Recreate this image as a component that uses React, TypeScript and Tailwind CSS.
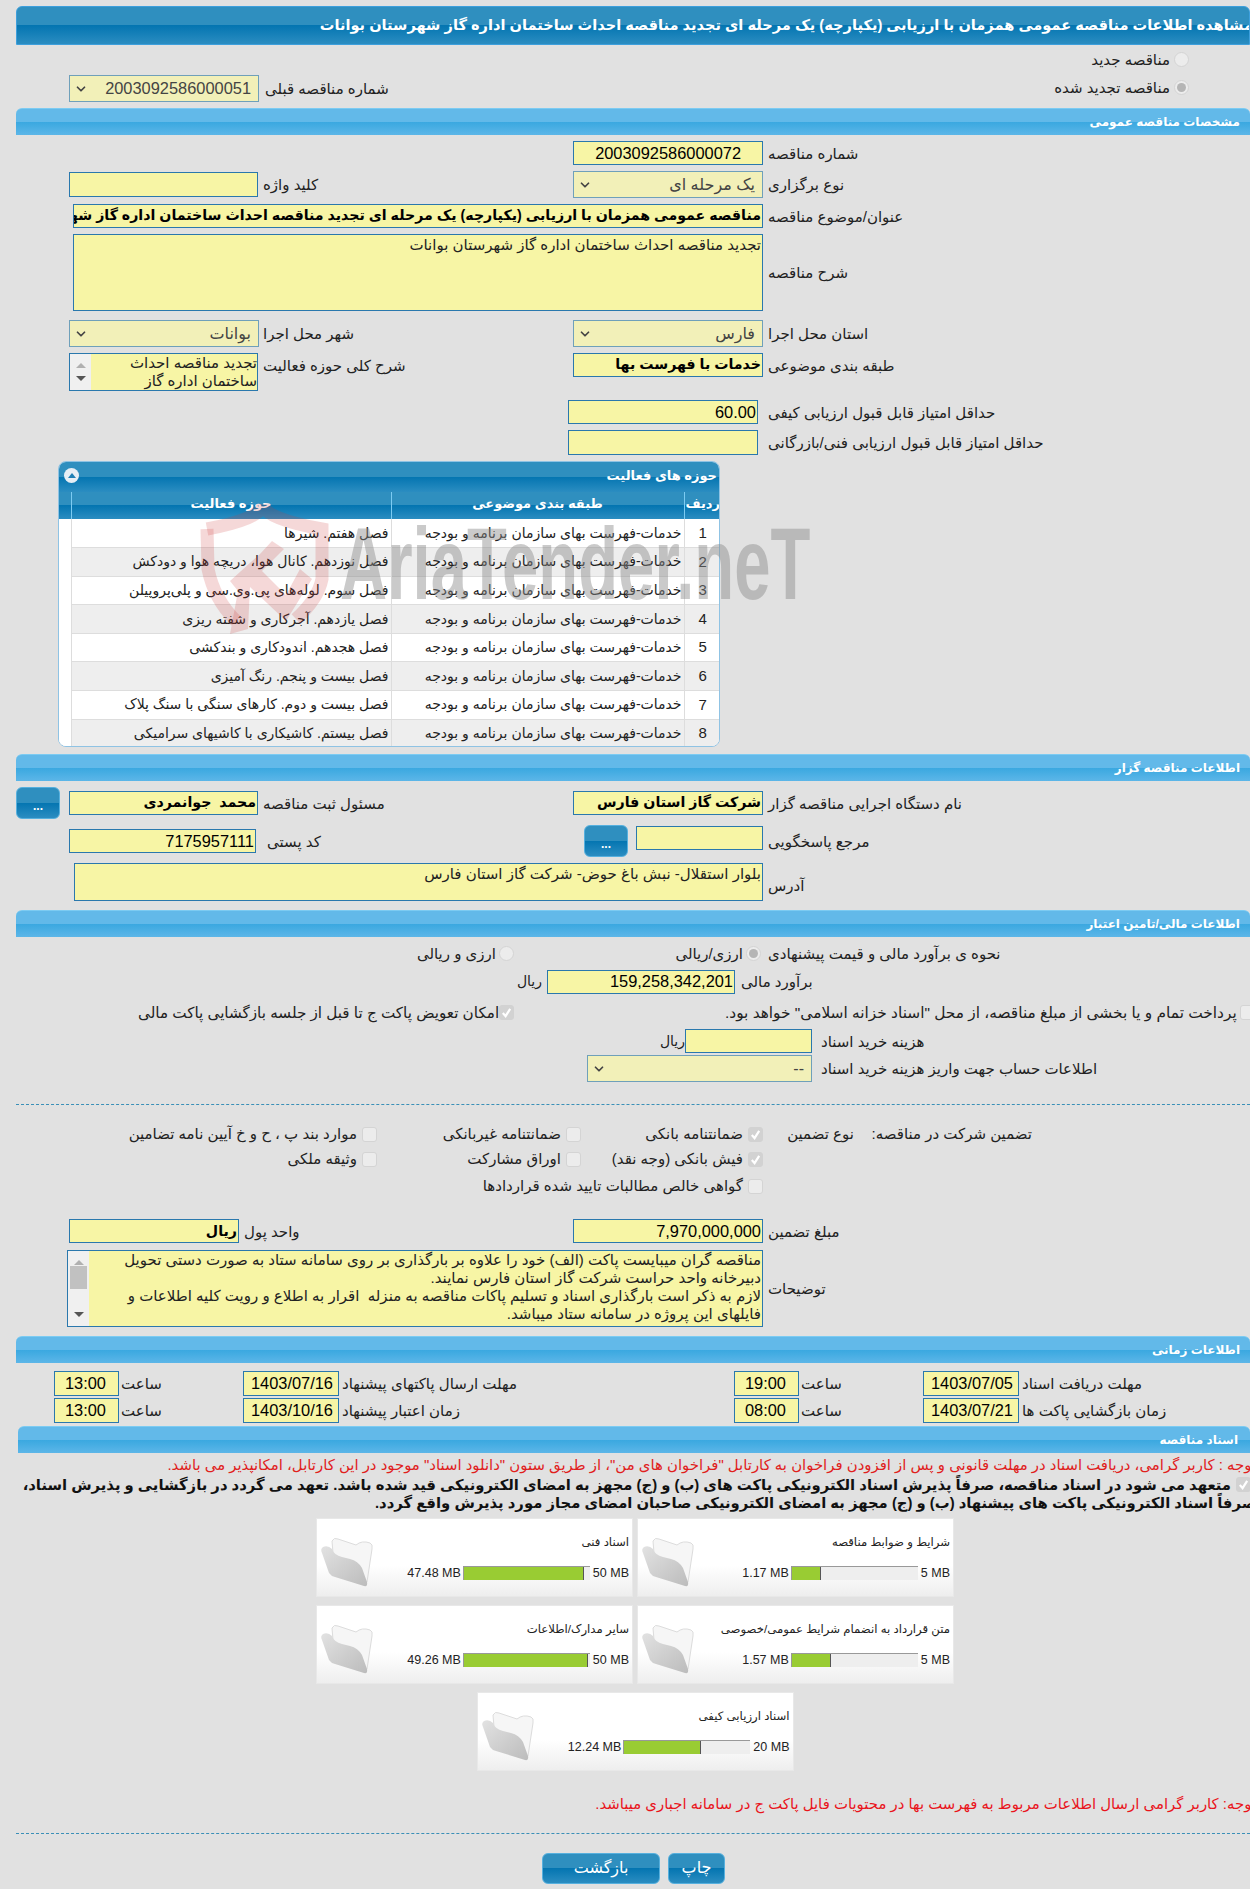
import type { ReactNode } from "react";
import { ChevronDown } from "lucide-react";

const TITLE_BG =
  "bg-[linear-gradient(to_bottom,#2f8fbf_0%,#2f8fbf_50%,#0475b1_50%,#2b8dc1_100%)]";
const SECTION_BG =
  "bg-[linear-gradient(to_bottom,#62b9e9_0%,#62b9e9_50%,#3aa8e0_50%,#5cb6e8_100%)]";

const ROWS = [
  ["1", "فصل هفتم. شیرها"],
  ["2", "فصل نوزدهم. کانال هوا، دریچه هوا و دودکش"],
  ["3", "فصل سوم. لوله‌های پی.وی.سی و پلی‌پروپیلن"],
  ["4", "فصل یازدهم. آجرکاری و شفته ریزی"],
  ["5", "فصل هجدهم. اندودکاری و بندکشی"],
  ["6", "فصل بیست و پنجم. رنگ آمیزی"],
  ["7", "فصل بیست و دوم. کارهای سنگی با سنگ پلاک"],
  ["8", "فصل بیستم. کاشیکاری با کاشیهای سرامیکی"],
];

const DOCS = [
  { title: "شرایط و ضوابط مناقصه", used: 1.17, max: 5 },
  { title: "اسناد فنی", used: 47.48, max: 50 },
  { title: "متن قرارداد به انضمام شرایط عمومی/خصوصی", used: 1.57, max: 5 },
  { title: "سایر مدارک/اطلاعات", used: 49.26, max: 50 },
  { title: "اسناد ارزیابی کیفی", used: 12.24, max: 20 },
];

function Section({ title, className = "" }: { title: string; className?: string }) {
  return (
    <div
      dir="rtl"
      className={`h-[27px] rounded-t-[6px] border-t border-[#7ccbf2] flex items-center pr-[10px] text-white text-[12px] font-bold ${SECTION_BG} ${className}`}
    >
      {title}
    </div>
  );
}

function Box({
  w,
  h = "h-[24px]",
  big,
  strong,
  children,
}: {
  w: string;
  h?: string;
  big?: boolean;
  strong?: boolean;
  children?: ReactNode;
}) {
  return (
    <div
      dir="rtl"
      className={`${w} ${h} shrink-0 bg-[#f7f5a5] border border-[#2a78ad] overflow-hidden whitespace-pre flex items-center pr-px text-black ${
        big ? "text-[16.4px]" : "text-[15px]"
      } ${strong ? "!text-[14.2px] font-bold" : ""}`}
    >
      {children}
    </div>
  );
}

function Select({ w, value, big }: { w: string; value: string; big?: boolean }) {
  return (
    <div className={`${w} h-[27px] shrink-0 bg-[#f2f0b8] border border-[#6fa0ba] flex items-center justify-between pl-[4px] pr-[7px] text-[#444]`}>
      <ChevronDown size={14} strokeWidth={3} className="text-[#444]" />
      <span dir="rtl" className={big ? "text-[16.4px]" : "text-[16px]"}>
        {value}
      </span>
    </div>
  );
}

function Label({ children, size = "text-[15px]" }: { children: ReactNode; size?: string }) {
  return (
    <span dir="rtl" className={`inline-block mt-[2px] ${size} text-[#222] whitespace-nowrap`}>
      {children}
    </span>
  );
}

function Radio({ on }: { on?: boolean }) {
  return (
    <span className="w-[15px] h-[15px] shrink-0 rounded-full border border-[#d4d4d4] bg-[#ececec] flex items-center justify-center">
      {on && <span className="w-[9px] h-[9px] rounded-full bg-[#b5b5b5]" />}
    </span>
  );
}

function Check({ on }: { on?: boolean }) {
  return (
    <span className={`w-[15px] h-[15px] shrink-0 rounded-[3px] border flex items-center justify-center ${on ? "bg-[#d2d2d2] border-[#d2d2d2]" : "bg-[#ececec] border-[#d4d4d4]"}`}>
      {on && (
        <svg width="11" height="11" viewBox="0 0 12 12" fill="none" stroke="#fff" strokeWidth="2.4">
          <path d="M2 6.5 5 10 10 2" />
        </svg>
      )}
    </span>
  );
}

function Opt({ on, children }: { on?: boolean; children: ReactNode }) {
  return (
    <span className="flex items-center gap-[5px] whitespace-nowrap text-[15px] text-[#222]">
      <Check on={on} />
      {children}
    </span>
  );
}

function Dots() {
  return (
    <button className={`w-[44px] h-[32px] shrink-0 rounded-[6px] border border-[#56b0de] text-white text-[12px] font-bold leading-[36px] ${TITLE_BG}`}>
      ...
    </button>
  );
}

function Scrollbar({ thumb }: { thumb?: boolean }) {
  return (
    <div className="w-[21px] h-full shrink-0 bg-[#f0f0f0] flex flex-col items-center justify-between py-[9px]">
      <span className="w-0 h-0 border-x-[5px] border-x-transparent border-b-[5px] border-b-[#b0b0b0]" />
      {thumb && <span className="w-[17px] h-[23px] bg-[#c1c1c1] -mt-[22px]" />}
      <span className="w-0 h-0 border-x-[5px] border-x-transparent border-t-[5px] border-t-[#555]" />
    </div>
  );
}

function Folder() {
  return (
    <svg width="54" height="52" viewBox="0 0 54 52" className="shrink-0">
      <defs>
        <linearGradient id="fld" x1="0" y1="0" x2="1" y2="1">
          <stop offset="0" stopColor="#e2e2e2" />
          <stop offset="1" stopColor="#bcbcbc" />
        </linearGradient>
      </defs>
      <path d="M12 6 Q14 2 18 4 L36 10 Q42 5 50 8 Q53 9 52 14 L47 47 Q46 50 43 48 L14 30Z" fill="#f6f6f6" stroke="#dcdcdc" />
      <path d="M3 12 Q0 14 2 18 L9 38 Q11 41 15 42 L44 51 Q48 52 47 47 L42 33 Q38 26 30 24 L22 22 Q14 20 12 14 Q8 10 3 12Z" fill="url(#fld)" />
    </svg>
  );
}

function DocCard({ title, used, max }: { title: string; used: number; max: number }) {
  return (
    <div dir="ltr" className="w-[317px] h-[79px] bg-[linear-gradient(to_bottom,#ffffff_0%,#ffffff_60%,#eeeeee_100%)] border border-[#e8e8e8] flex pl-[3px] pr-[3px]">
      <div className="pt-[16px]">
        <Folder />
      </div>
      <div className="flex-1 flex flex-col">
        <div dir="rtl" className="mt-[15px] text-[11.7px] text-[#222] leading-[16px] whitespace-nowrap">
          {title}
        </div>
        <div className="mt-[14px] flex items-center justify-end gap-[2px] text-[12.5px] text-[#222]">
          <span>{used.toFixed(2)} MB</span>
          <div className="w-[127px] h-[14px] bg-[#eeeeee] border-t border-l border-[#999]">
            <div className="h-full bg-[#99cc33] border-r border-[#555]" style={{ width: `${(used / max) * 100}%` }} />
          </div>
          <span className="ml-px">{max} MB</span>
        </div>
      </div>
    </div>
  );
}

function Watermark() {
  return (
    <>
      <svg width="130" height="140" viewBox="0 0 130 140" className="absolute left-[142px] top-[38px] pointer-events-none">
        <g fill="none" stroke="#cc3a3a" strokeOpacity="0.2" strokeWidth="13">
          <path d="M7 30 Q60 20 63 6 Q66 20 122 30 L122 80 Q118 100 96 120" />
          <path d="M7 30 L8 70 Q14 100 36 122" />
        </g>
        <path d="M30 82 L60 55 L72 42 L84 50 L62 72 L86 96 L100 70 L112 80 L86 122 L50 88 L48 130 L30 135 L38 92Z" fill="#cc3a3a" fillOpacity="0.2" />
      </svg>
      <div className="absolute left-[282px] top-[53px] origin-left scale-x-[0.64] text-[102px] leading-[100px] font-bold text-[#8a8a8a]/45 whitespace-nowrap pointer-events-none">
        AriaTender.neT
      </div>
    </>
  );
}

export default function App() {
  return (
    <div className="relative w-[1250px] h-[1889px] overflow-hidden bg-[#e1e1e1] pl-4 pt-[6px] font-['Liberation_Sans','DejaVu_Sans',sans-serif]">
      {/* Title */}
      <div
        dir="rtl"
        className={`h-[39px] rounded-t-[6px] border border-[#3d9fdc] flex items-center justify-start overflow-hidden whitespace-nowrap text-white text-[14.6px] font-bold ${TITLE_BG}`}
      >
        <span className="-mr-[4px]">مشاهده اطلاعات مناقصه عمومی همزمان با ارزیابی (یکپارچه) یک مرحله ای تجدید مناقصه احداث ساختمان اداره گاز شهرستان بوانات</span>
      </div>

      {/* Renewal choice */}
      <div className="h-[63px] flex justify-between pl-[53px] pr-[61px]">
        <div className="flex items-center gap-[6px] h-[27px] mt-[30px]">
          <Select w="w-[190px]" value="2003092586000051" big />
          <Label>شماره مناقصه قبلی</Label>
        </div>
        <div dir="rtl" className="flex flex-col gap-[14px] pt-[7px]">
          <div className="h-[14px] flex items-center gap-[4px]">
            <Radio />
            <Label>مناقصه جدید</Label>
          </div>
          <div className="h-[14px] flex items-center gap-[4px]">
            <Radio on />
            <Label>مناقصه تجدید شده</Label>
          </div>
        </div>
      </div>

      <Section title="مشخصات مناقصه عمومی" />

      <div className="pl-[53px] mt-[6px] grid grid-cols-[504px_1fr] grid-rows-[24px_27px] gap-y-[6px]">
        <div />
        <div className="flex items-center gap-[5px]">
          <Box w="w-[190px]" big>
            <span className="pr-[20px]">2003092586000072</span>
          </Box>
          <Label>شماره مناقصه</Label>
        </div>
        <div className="flex items-center gap-[5px]">
          <Box w="w-[189px]" h="h-[25px]" />
          <Label>کلید واژه</Label>
        </div>
        <div className="flex items-center gap-[5px]">
          <Select w="w-[190px]" value="یک مرحله ای" />
          <Label>نوع برگزاری</Label>
        </div>
      </div>

      <div className="pl-[57px] mt-[6px] h-[24px] flex items-center gap-[5px]">
        <Box w="w-[690px]" strong>
          مناقصه عمومی همزمان با ارزیابی (یکپارچه) یک مرحله ای تجدید مناقصه احداث ساختمان اداره گاز شهرستان بوانات
        </Box>
        <Label>عنوان/موضوع مناقصه</Label>
      </div>

      <div className="pl-[57px] mt-[6px] h-[77px] flex items-center gap-[5px]">
        <div dir="rtl" className="w-[690px] h-[77px] shrink-0 bg-[#f7f5a5] border border-[#2a78ad] pr-px text-[15px] leading-[20px] text-[#222]">
          تجدید مناقصه احداث ساختمان اداره گاز شهرستان بوانات
        </div>
        <Label>شرح مناقصه</Label>
      </div>

      <div className="pl-[53px] mt-[9px] grid grid-cols-[504px_1fr] grid-rows-[27px_38px] gap-y-[6px]">
        <div className="flex items-center gap-[4px]">
          <Select w="w-[190px]" value="بوانات" />
          <Label>شهر محل اجرا</Label>
        </div>
        <div className="flex items-center gap-[5px]">
          <Select w="w-[190px]" value="فارس" />
          <Label>استان محل اجرا</Label>
        </div>
        <div className="flex items-start gap-[5px]">
          <div className="w-[189px] h-[38px] shrink-0 bg-[#f7f5a5] border border-[#2a78ad] flex overflow-hidden">
            <Scrollbar />
            <div dir="rtl" className="flex-1 text-[15px] leading-[18px] text-[#222] whitespace-nowrap">
              <div>تجدید مناقصه احداث</div>
              <div>ساختمان اداره گاز</div>
            </div>
          </div>
          <Label>شرح کلی حوزه فعالیت</Label>
        </div>
        <div className="flex items-start gap-[5px]">
          <Box w="w-[190px]" strong>
            خدمات با فهرست بها
          </Box>
          <Label>طبقه بندی موضوعی</Label>
        </div>
      </div>

      <div className="ml-[552px] mt-[9px] h-[24px] flex items-center gap-[10px]">
        <Box w="w-[190px]" big>
          60.00
        </Box>
        <Label>حداقل امتیاز قابل قبول ارزیابی کیفی</Label>
      </div>
      <div className="ml-[552px] mt-[6px] h-[25px] flex items-center gap-[10px]">
        <Box w="w-[190px]" h="h-[25px]" />
        <Label>حداقل امتیاز قابل قبول ارزیابی فنی/بازرگانی</Label>
      </div>

      {/* Activity table */}
      <div className="relative ml-[42px] mt-[6px] w-[662px] h-[286px]">
        <div className="h-full rounded-[8px] overflow-hidden border border-[#8fc3e4] bg-white">
          <div dir="rtl" className={`h-[30px] flex items-center justify-between pr-[2px] pl-[5px] pb-[3px] text-white text-[13px] font-bold ${TITLE_BG}`}>
            <span>حوزه های فعالیت</span>
            <span className="w-[15px] h-[15px] rounded-full bg-[#e6eef5] flex items-center justify-center">
              <span className="w-0 h-0 border-x-[4px] border-x-transparent border-b-[5px] border-b-[#1f7fb5]" />
            </span>
          </div>
          <table dir="rtl" className="w-full table-fixed border-collapse text-[14px] text-[#222]">
            <colgroup>
              <col className="w-[37px]" />
              <col className="w-[293px]" />
              <col className="w-[320px]" />
              <col className="w-[12px]" />
            </colgroup>
            <thead>
              <tr className={`h-[27px] text-white text-[13px] ${TITLE_BG}`}>
                <th className="border-l border-[#7ccbf2] font-bold pb-[3px]">ردیف</th>
                <th className="border-l border-[#7ccbf2] font-bold pb-[3px]">طبقه بندی موضوعی</th>
                <th className="border-l border-[#7ccbf2] font-bold pb-[3px]">حوزه فعالیت</th>
                <th />
              </tr>
            </thead>
            <tbody>
              {ROWS.map(([n, name], i) => (
                <tr key={n} className={`h-[28.6px] ${i % 2 ? "bg-[#eeeeee]" : "bg-white"}`}>
                  <td className="text-center text-[15px] border-l border-b border-[#dddddd]">{n}</td>
                  <td className="pr-[2px] whitespace-nowrap overflow-hidden border-l border-b border-[#dddddd]">خدمات-فهرست بهای سازمان برنامه و بودجه</td>
                  <td className="pr-[2px] whitespace-nowrap overflow-hidden border-l border-b border-[#dddddd]">{name}</td>
                  <td className="bg-white" />
                </tr>
              ))}
            </tbody>
          </table>
        </div>
        <Watermark />
      </div>

      <Section title="اطلاعات مناقصه گزار" className="mt-[7px]" />

      <div className="mt-[6px] h-[32px] flex items-center">
        <Dots />
        <div className="ml-[9px] flex items-center gap-[5px] w-[504px]">
          <Box w="w-[189px]" strong>
            محمد  جوانمردی
          </Box>
          <Label>مسئول ثبت مناقصه</Label>
        </div>
        <div className="flex items-center gap-[5px]">
          <Box w="w-[190px]" strong>
            شرکت گاز استان فارس
          </Box>
          <Label>نام دستگاه اجرایی مناقصه گزار</Label>
        </div>
      </div>
      <div className="mt-[6px] h-[32px] pl-[53px] flex items-center">
        <div className="flex items-center gap-[11px] w-[515px]">
          <Box w="w-[187px]" big>
            7175957111
          </Box>
          <Label>کد پستی</Label>
        </div>
        <Dots />
        <div className="ml-[8px] -mt-[6px] flex items-center gap-[5px]">
          <Box w="w-[127px]" />
          <span className="mt-[6px]">
            <Label>مرجع پاسخگویی</Label>
          </span>
        </div>
      </div>
      <div className="pl-[58px] mt-[6px] flex items-center gap-[5px]">
        <div dir="rtl" className="w-[689px] h-[38px] shrink-0 bg-[#f7f5a5] border border-[#2a78ad] pr-px text-[15px] leading-[20px] text-[#222]">
          بلوار استقلال- نبش باغ حوض- شرکت گاز استان فارس
        </div>
        <span className="mt-[6px]">
          <Label>آدرس</Label>
        </span>
      </div>

      <Section title="اطلاعات مالی/تامین اعتبار" className="mt-[9px]" />

      <div className="h-[32px] flex items-center">
        <div className="w-[498px] flex items-center justify-end gap-[3px]">
          <Label>ارزی و ریالی</Label>
          <Radio />
        </div>
        <div className="w-[247px] flex items-center justify-end gap-[3px]">
          <Label>ارزی/ریالی</Label>
          <Radio on />
        </div>
        <span className="ml-[7px]">
          <Label>نحوه ی برآورد مالی و قیمت پیشنهادی</Label>
        </span>
      </div>

      <div className="h-[25px] pl-[503px] flex items-center">
        <span className="w-[28px] pr-[5px] text-[14px] text-[#222]" dir="rtl">ریال</span>
        <Box w="w-[188px]" big>
          159,258,342,201
        </Box>
        <span className="ml-[6px]">
          <Label>برآورد مالی</Label>
        </span>
      </div>

      <div className="mt-[8px] h-[20px] flex items-center pl-[122px] w-[1300px]">
        <div className="w-[587px] flex items-center">
          <Label size="text-[15.2px]">امکان تعویض پاکت ج تا قبل از جلسه بازگشایی پاکت مالی</Label>
          <Check on />
        </div>
        <Label size="text-[15.4px]">پرداخت تمام و یا بخشی از مبلغ مناقصه، از محل "اسناد خزانه اسلامی" خواهد بود.</Label>
        <span className="ml-[3px]">
          <Check />
        </span>
      </div>

      <div className="mt-[7px] h-[24px] pl-[646px] flex items-center">
        <span className="w-[23px] text-[14px] text-[#222]" dir="rtl">ریال</span>
        <Box w="w-[127px]" />
        <span className="ml-[9px]">
          <Label>هزینه خرید اسناد</Label>
        </span>
      </div>
      <div className="mt-[2px] h-[27px] pl-[571px] flex items-center gap-[9px]">
        <Select w="w-[225px]" value="--" />
        <Label>اطلاعات حساب جهت واریز هزینه خرید اسناد</Label>
      </div>

      <div className="mt-[22px] border-t border-dashed border-[#3a8fb7]" />

      {/* Guarantee */}
      <div dir="rtl" className="mt-[17px] pr-[218px] grid grid-cols-[178px_91px_182px_204px_1fr] grid-rows-[25px_24px_30px] items-center text-[15px] text-[#222] whitespace-nowrap">
        <span>تضمین شرکت در مناقصه:</span>
        <span>نوع تضمین</span>
        <Opt on>ضمانتنامه بانکی</Opt>
        <Opt>ضمانتنامه غیربانکی</Opt>
        <Opt>موارد بند پ ، ح و خ آیین نامه تضامین</Opt>
        <span />
        <span />
        <Opt on>فیش بانکی (وجه نقد)</Opt>
        <Opt>اوراق مشارکت</Opt>
        <Opt>وثیقه ملکی</Opt>
        <span />
        <span />
        <span className="col-span-3">
          <Opt>گواهی خالص مطالبات تایید شده قراردادها</Opt>
        </span>
      </div>

      <div className="mt-[18px] pl-[53px] grid grid-cols-[504px_1fr]">
        <div className="flex items-center gap-[5px]">
          <Box w="w-[170px]" strong>
            ریال
          </Box>
          <Label>واحد پول</Label>
        </div>
        <div className="flex items-center gap-[5px]">
          <Box w="w-[190px]" big>
            7,970,000,000
          </Box>
          <Label>مبلغ تضمین</Label>
        </div>
      </div>

      <div className="mt-[6px] pl-[51px] flex items-center gap-[5px]">
        <div className="w-[696px] h-[77px] shrink-0 bg-[#f7f5a5] border border-[#2a78ad] flex overflow-hidden">
          <Scrollbar thumb />
          <div dir="rtl" className="flex-1 pr-px text-[15px] leading-[18px] text-[#222] whitespace-pre">
            <div>مناقصه گران میبایست پاکت (الف) خود را علاوه بر بارگذاری بر روی سامانه ستاد به صورت دستی تحویل</div>
            <div>دبیرخانه واحد حراست شرکت گاز استان فارس نمایند.</div>
            <div>لازم به ذکر است بارگذاری اسناد و تسلیم پاکات مناقصه به منزله  اقرار به اطلاع و رویت کلیه اطلاعات و</div>
            <div>فایلهای این پروژه در سامانه ستاد میباشد.</div>
          </div>
        </div>
        <Label>توضیحات</Label>
      </div>

      <Section title="اطلاعات زمانی" className="mt-[9px]" />

      <div className="pl-[38px] mt-[8px] flex flex-col gap-[2px]">
        {[
          ["13:00", "1403/07/16", "مهلت ارسال پاکتهای پیشنهاد", "19:00", "1403/07/05", "مهلت دریافت اسناد"],
          ["13:00", "1403/10/16", "زمان اعتبار پیشنهاد", "08:00", "1403/07/21", "زمان بازگشایی پاکت ها"],
        ].map((r) => (
          <div key={r[1]} className="h-[25px] grid grid-cols-[189px_491px_189px_1fr] items-center">
            <div className="flex items-center gap-[2px]">
              <Box w="w-[65px]" h="h-[25px]" big>
                <span className="pr-[11px]">{r[0]}</span>
              </Box>
              <Label>ساعت</Label>
            </div>
            <div className="flex items-center gap-[3px]">
              <Box w="w-[96px]" h="h-[25px]" big>
                <span className="pr-[4px]">{r[1]}</span>
              </Box>
              <Label>{r[2]}</Label>
            </div>
            <div className="flex items-center gap-[2px]">
              <Box w="w-[65px]" h="h-[25px]" big>
                <span className="pr-[11px]">{r[3]}</span>
              </Box>
              <Label>ساعت</Label>
            </div>
            <div className="flex items-center gap-[3px]">
              <Box w="w-[96px]" h="h-[25px]" big>
                <span className="pr-[4px]">{r[4]}</span>
              </Box>
              <Label>{r[5]}</Label>
            </div>
          </div>
        ))}
      </div>

      <Section title="اسناد مناقصه" className="mt-[3px] ml-[2px] !pr-[12px]" />

      <div dir="rtl" className="-mr-[6px] mt-[3px] text-[14.9px] leading-[18px] text-[#e0201c] whitespace-nowrap">
        توجه : کاربر گرامی، دریافت اسناد در مهلت قانونی و پس از افزودن فراخوان به کارتابل "فراخوان های من"، از طریق ستون "دانلود اسناد" موجود در این کارتابل، امکانپذیر می باشد.
      </div>
      <div dir="rtl" className="-mr-[6px] mt-[2px] text-[14.8px] font-bold leading-[18px] text-[#111] whitespace-nowrap">
        <div className="flex items-center gap-[5px] pr-[5px]">
          <Check on />
          متعهد می شود در اسناد مناقصه، صرفاً پذیرش اسناد الکترونیکی پاکت های (ب) و (ج) مجهز به امضای الکترونیکی قید شده باشد. تعهد می گردد در بازگشایی و پذیرش اسناد،
        </div>
        <div>صرفاً اسناد الکترونیکی پاکت های پیشنهاد (ب) و (ج) مجهز به امضای الکترونیکی صاحبان امضای مجاز مورد پذیرش واقع گردد.</div>
      </div>

      <div dir="rtl" className="mt-[6px] ml-[300px] w-[638px] flex flex-wrap justify-center gap-x-[4px] gap-y-[8px]">
        {DOCS.map((d) => (
          <DocCard key={d.title} {...d} />
        ))}
      </div>

      <div dir="rtl" className="-mr-[6px] mt-[24px] text-[14.9px] leading-[18px] text-[#e9141c] whitespace-nowrap">
        توجه: کاربر گرامی ارسال اطلاعات مربوط به فهرست بها در محتویات فایل پاکت ج در سامانه اجباری میباشد.
      </div>

      <div className="mt-[20px] border-t border-dashed border-[#3a8fb7]" />

      <div className="mt-[19px] ml-[526px] flex gap-[8px]">
        <button className={`w-[118px] h-[31px] rounded-[6px] border border-[#56b0de] text-white text-[16px] ${TITLE_BG}`}>بازگشت</button>
        <button className={`w-[57px] h-[31px] rounded-[6px] border border-[#56b0de] text-white text-[16px] ${TITLE_BG}`}>چاپ</button>
      </div>
    </div>
  );
}
